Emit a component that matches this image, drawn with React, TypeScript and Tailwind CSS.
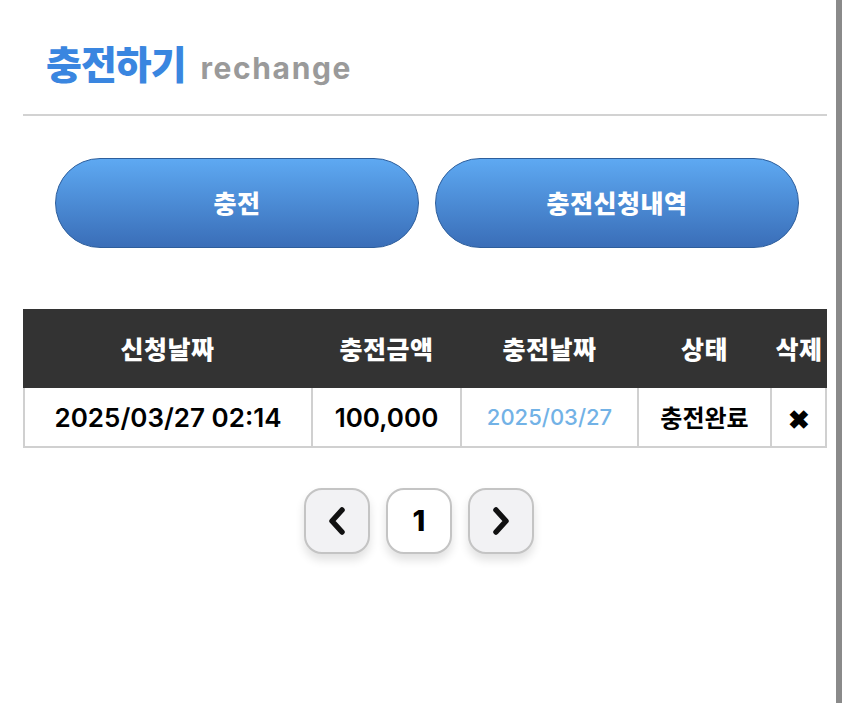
import React from 'react';

const columns = [
  { label: '신청날짜', width: 'w-[289px]' },
  { label: '충전금액', width: 'w-[149px]' },
  { label: '충전날짜', width: 'w-[177px]' },
  { label: '상태', width: 'w-[133px]' },
  { label: '삭제', width: 'flex-1' },
];

const ChevronLeft = () => (
  <svg width="24" height="30" viewBox="0 0 24 30" fill="none">
    <path d="M17 4 L7 15 L17 26" stroke="#111" strokeWidth="5.5" strokeLinecap="round" strokeLinejoin="round" />
  </svg>
);

const ChevronRight = () => (
  <svg width="24" height="30" viewBox="0 0 24 30" fill="none">
    <path d="M7 4 L17 15 L7 26" stroke="#111" strokeWidth="5.5" strokeLinecap="round" strokeLinejoin="round" />
  </svg>
);

const App: React.FC = () => {
  const kr = { fontFamily: '"Noto Sans CJK KR", "Noto Sans", sans-serif' };
  const num = { fontFamily: 'Inter, "Noto Sans CJK KR", sans-serif' };

  return (
    <div className="flex w-[850px] h-[703px] bg-white" style={kr}>
      <div className="w-[836px] pl-[23px] pr-[9px] pt-[43px]">
        {/* title */}
        <div className="flex items-baseline gap-[15px] pl-[23px]">
          <span className="text-[39px] font-black leading-none text-[#3a86e0] tracking-[-1px]">충전하기</span>
          <span className="text-[30px] font-bold leading-none text-[#9a9a9a] tracking-[1.6px]" style={num}>rechange</span>
        </div>
        <div className="mt-[31px] h-[2px] bg-[#d2d2d2]" />

        {/* action buttons */}
        <div className="flex gap-[16px] pl-[32px] pr-[28px] mt-[42px]">
          {['충전', '충전신청내역'].map((t) => (
            <button
              key={t}
              className="flex-1 h-[90px] rounded-full border-[1.5px] border-[#2d5e9c] bg-gradient-to-b from-[#5ea9f2] to-[#3a6eb8] text-white text-[25px] font-black tracking-[0.5px]"
            >
              {t}
            </button>
          ))}
        </div>

        {/* history table */}
        <div className="mt-[61px]">
          <div className="flex h-[79px] bg-[#333333] text-white text-[25px] font-black tracking-[0.5px]">
            {columns.map((c) => (
              <div key={c.label} className={`${c.width} flex items-center justify-center`}>
                {c.label}
              </div>
            ))}
          </div>
          <div className="flex h-[60px] border-2 border-t-0 border-[#d0d0d0] text-[26px] text-black">
            <div className="w-[288px] flex items-center justify-center border-r-2 border-[#d0d0d0] font-semibold" style={num}>
              2025/03/27 02:14
            </div>
            <div className="w-[149px] flex items-center justify-center border-r-2 border-[#d0d0d0] font-semibold" style={num}>
              100,000
            </div>
            <div className="w-[177px] flex items-center justify-center border-r-2 border-[#d0d0d0] text-[#72b2e6] text-[22px] font-medium" style={num}>
              2025/03/27
            </div>
            <div className="w-[133px] flex items-center justify-center border-r-2 border-[#d0d0d0] font-bold text-[24px]">
              충전완료
            </div>
            <div className="flex-1 flex items-center justify-center text-[26px] font-black">✖</div>
          </div>
        </div>

        {/* pagination */}
        <div className="flex justify-center gap-[16px] mt-[40px] pr-[12px]">
          <div className="w-[66px] h-[66px] rounded-[18px] border-2 border-[#c4c4c4] bg-[#f2f2f4] shadow-[0_6px_10px_rgba(0,0,0,0.12)] flex items-center justify-center">
            <ChevronLeft />
          </div>
          <div className="w-[66px] h-[66px] rounded-[18px] border-2 border-[#c4c4c4] bg-white shadow-[0_6px_10px_rgba(0,0,0,0.12)] flex items-center justify-center text-[29px] font-extrabold" style={num}>
            1
          </div>
          <div className="w-[66px] h-[66px] rounded-[18px] border-2 border-[#c4c4c4] bg-[#f2f2f4] shadow-[0_6px_10px_rgba(0,0,0,0.12)] flex items-center justify-center">
            <ChevronRight />
          </div>
        </div>
      </div>
      <div className="w-[6px] h-full bg-[#8a8a8a]" />
    </div>
  );
};

export default App;
